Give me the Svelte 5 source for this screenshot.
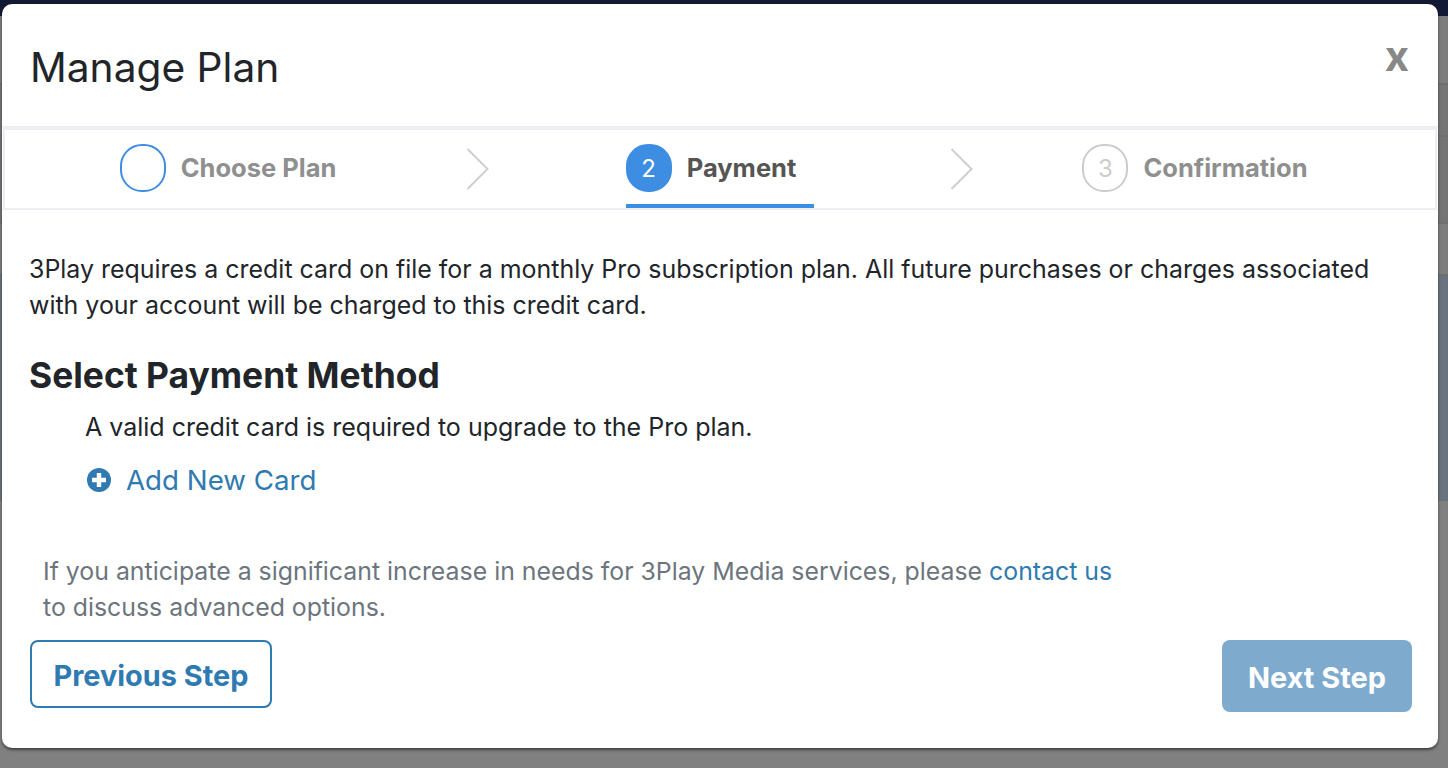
<script>
  const steps = [
    { num: "", label: "Choose Plan", state: "done" },
    { num: "2", label: "Payment", state: "active" },
    { num: "3", label: "Confirmation", state: "todo" }
  ];
</script>

<div class="page">
  <div class="nav"></div>
  <div class="row r1"></div>
  <div class="row r2"></div>
  <div class="row r3"></div>
  <div class="row r4"></div>
  <div class="banner"></div>
</div>

<div class="modal">
  <div class="head">
    <h1>Manage Plan</h1>
    <span class="close">x</span>
  </div>

  <div class="stepper">
    {#each steps as step, i}
      <div class="step {step.state}">
        <span class="circle">{step.num}</span>
        <span class="label">{step.label}</span>
      </div>
      {#if i < steps.length - 1}
        <svg class="chev" width="22" height="42" viewBox="0 0 22 42">
          <path d="M0.5 1 L20.5 21 L0.5 41" fill="none" stroke="#cfcfcf" stroke-width="2" />
        </svg>
      {/if}
    {/each}
  </div>

  <div class="body">
    <p class="intro">
      3Play requires a credit card on file for a monthly Pro subscription plan. All future purchases or charges associated
      <br />with your account will be charged to this credit card.
    </p>
    <h2>Select Payment Method</h2>
    <div class="method">
      <p>A valid credit card is required to upgrade to the Pro plan.</p>
      <a class="add" href="#add">
        <svg width="24" height="24" viewBox="0 0 24 24">
          <circle cx="12" cy="12" r="12" fill="#2f7ab0" />
          <path d="M12 5 V19 M5 12 H19" stroke="#fff" stroke-width="4.4" />
        </svg>
        Add New Card
      </a>
    </div>
    <p class="note">
      If you anticipate a significant increase in needs for 3Play Media services, please <a href="#contact">contact us</a>
      <br />to discuss advanced options.
    </p>
  </div>

  <div class="foot">
    <button class="prev">Previous Step</button>
    <button class="next">Next Step</button>
  </div>
</div>

<style>
  :global(body) {
    margin: 0;
    background: #808080;
    font-family: Inter, "Liberation Sans", sans-serif;
  }

  .page {
    height: 768px;
    overflow: hidden;
  }
  .nav {
    height: 16px;
    background: #121a35;
  }
  .row {
    border-bottom: 2px solid #6f6f6f;
    background: #7d7d7d;
    box-sizing: border-box;
  }
  .r1 { height: 69px; }
  .r2 { height: 52px; background: #757575; }
  .r3 { height: 87px; background: #747474; }
  .r4 { height: 52px; }
  .banner {
    height: 225px;
    background: #69737f;
  }

  /* sits over the page like any dialog */
  .modal {
    position: absolute;
    left: 2px;
    top: 4px;
    width: 1436px;
    height: 744px;
    box-sizing: border-box;
    background: #fff;
    border-radius: 10px;
    box-shadow: 0 2px 3px rgba(0, 0, 0, 0.5);
    display: flex;
    flex-direction: column;
    color: #212529;
  }

  .head {
    height: 122px;
    flex: none;
    display: flex;
    justify-content: space-between;
    align-items: flex-start;
    padding: 0 29px 0 28px;
    box-sizing: border-box;
  }
  h1 {
    margin: 37px 0 0;
    font-size: 40.7px;
    line-height: 54px;
    font-weight: 400;
  }
  .close {
    margin-top: 28px;
    font-size: 42px;
    line-height: 48px;
    font-weight: 700;
    color: #888;
  }

  .stepper {
    height: 84px;
    flex: none;
    margin: 0 1px;
    box-sizing: border-box;
    border: 2px solid #eeeef2;
    border-top-width: 4px;
    display: grid;
    grid-template-columns: 1fr auto 1fr auto 1fr;
    align-items: center;
  }
  .step {
    height: 78px;
    box-sizing: border-box;
    justify-self: center;
    display: flex;
    align-items: center;
    gap: 15px;
    padding: 2px 18px 0 0;
    border-bottom: 4px solid transparent;
    font-size: 25.5px;
    font-weight: 700;
    color: #8f8f8f;
  }
  .step.done {
    margin-left: 2px;
  }
  .step.active {
    color: #555;
    border-bottom-color: #3d8de2;
  }
  .label {
    margin-top: -2px;
  }
  .circle {
    width: 46px;
    height: 48px;
    box-sizing: border-box;
    border: 2px solid #ccc;
    border-radius: 22px;
    display: flex;
    align-items: center;
    justify-content: center;
    font-size: 24px;
    font-weight: 400;
    color: #ccc;
  }
  .done .circle {
    border-color: #3d8de2;
  }
  .active .circle {
    background: #3d8de2;
    border-color: #3d8de2;
    color: #fff;
  }

  .body {
    padding: 0 27px;
    flex: 1;
  }
  p {
    margin: 0;
    font-size: 24.9px;
    line-height: 36px;
  }
  .intro {
    margin-top: 41px;
    font-size: 24.94px;
  }
  h2 {
    margin: 32px 0 0;
    font-size: 35.4px;
    line-height: 42px;
    font-weight: 700;
  }
  .method {
    padding-left: 56px;
    margin-top: 12px;
  }
  .method p {
    font-size: 25px;
  }
  .add {
    display: flex;
    align-items: center;
    gap: 15px;
    margin: 17px 0 0 2px;
    font-size: 27.7px;
    line-height: 36px;
    color: #2f7ab0;
    text-decoration: none;
  }
  .note {
    margin: 55px 0 0 14px;
    font-size: 24.85px;
    color: #6c757d;
  }
  .note a {
    color: #2f7ab0;
    text-decoration: none;
  }

  .foot {
    flex: none;
    display: flex;
    justify-content: space-between;
    align-items: flex-start;
    padding: 0 26px 36px 28px;
  }
  button {
    font-family: inherit;
    font-size: 28.9px;
    font-weight: 700;
    border-radius: 8px;
    box-sizing: border-box;
    padding: 2px 0 0;
  }
  .prev {
    width: 242px;
    height: 68px;
    background: #fff;
    border: 2px solid #2f7ab0;
    color: #2f7ab0;
  }
  .next {
    width: 190px;
    height: 72px;
    background: #7eaace;
    border: none;
    color: #fff;
  }
</style>
